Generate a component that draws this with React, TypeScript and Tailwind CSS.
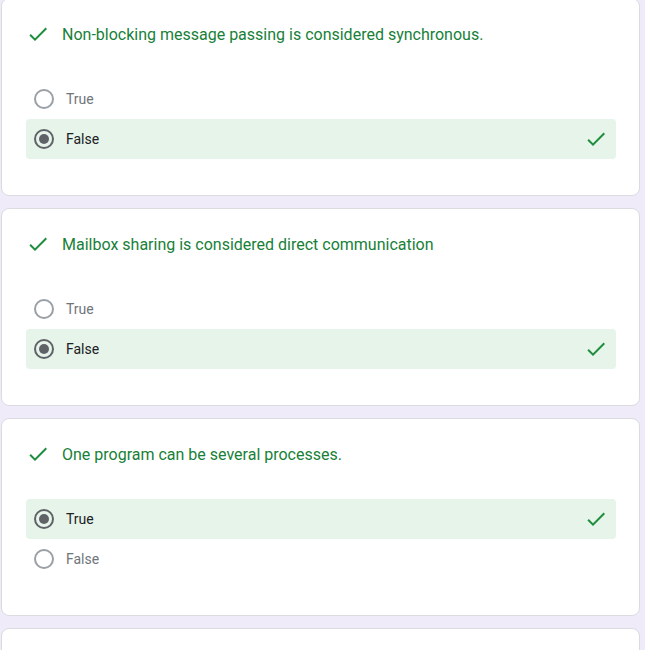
import React from "react";

type Question = {
  title: string;
  options: string[];
  picked: number;
};

const questions: Question[] = [
  {
    title: "Non-blocking message passing is considered synchronous.",
    options: ["True", "False"],
    picked: 1,
  },
  {
    title: "Mailbox sharing is considered direct communication",
    options: ["True", "False"],
    picked: 1,
  },
  {
    title: "One program can be several processes.",
    options: ["True", "False"],
    picked: 0,
  },
];

const Check = ({ className }: { className?: string }) => (
  <svg
    xmlns="http://www.w3.org/2000/svg"
    width="24"
    height="24"
    viewBox="0 0 24 24"
    fill="currentColor"
    className={className}
  >
    <path d="M9 16.17L4.83 12l-1.42 1.41L9 19 21 7l-1.41-1.41z" />
  </svg>
);

const Radio = ({ checked }: { checked: boolean }) =>
  checked ? (
    <span className="flex h-5 w-5 shrink-0 items-center justify-center rounded-full border-2 border-[#5f6368]">
      <span className="h-[10px] w-[10px] rounded-full bg-[#5f6368]" />
    </span>
  ) : (
    <span className="h-5 w-5 shrink-0 rounded-full border-2 border-[#9aa0a6]" />
  );

const QuestionCard = ({ q }: { q: Question }) => (
  <div className="ml-[1px] h-[198px] w-[639px] rounded-lg border border-[#dadce0] bg-white pl-6 pr-[23px] pt-6">
    <div className="flex h-6 items-center gap-3">
      <Check className="-mt-[2px] text-[#1e8e3e]" />
      <span className="text-base text-[#188038]">{q.title}</span>
    </div>
    <div className="mt-8 flex flex-col">
      {q.options.map((opt, i) => {
        const sel = i === q.picked;
        return (
          <div
            key={opt}
            className={
              sel
                ? "flex h-10 items-center rounded bg-[#e6f4ea] pl-2 pr-2"
                : "flex h-10 items-center rounded pl-2 pr-2"
            }
          >
            <Radio checked={sel} />
            <span
              className={
                sel
                  ? "ml-3 text-sm text-[#202124]"
                  : "ml-3 text-sm text-[#70757a]"
              }
            >
              {opt}
            </span>
            {sel && <Check className="ml-auto text-[#1e8e3e]" />}
          </div>
        );
      })}
    </div>
  </div>
);

export default function App() {
  return (
    <div
      className="h-[650px] w-[645px] overflow-hidden bg-[#f0ebf8]"
      style={{ fontFamily: "Roboto, 'Liberation Sans', sans-serif" }}
    >
      <div className="-mt-[2px] flex flex-col gap-3">
        {questions.map((q) => (
          <QuestionCard key={q.title} q={q} />
        ))}
        <div className="ml-[1px] h-[198px] w-[639px] rounded-lg border border-[#dadce0] bg-white" />
      </div>
    </div>
  );
}
